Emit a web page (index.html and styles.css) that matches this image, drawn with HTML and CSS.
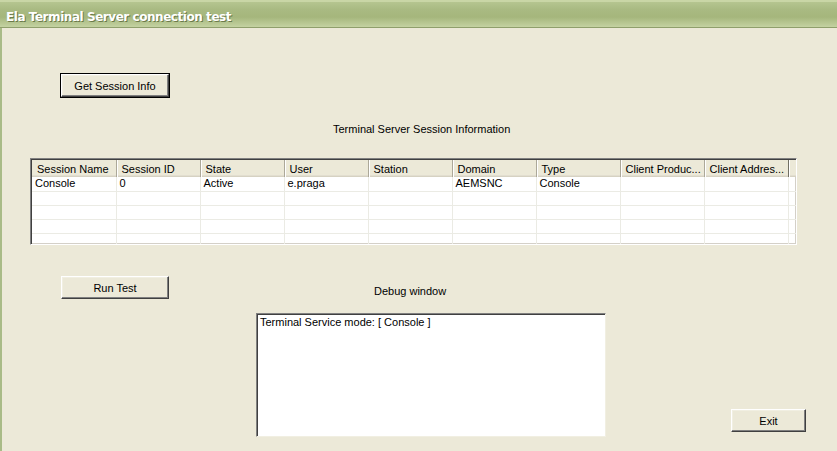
FILE: index.html
```html
<!DOCTYPE html>
<html lang="en">
<head>
    <meta charset="UTF-8">
    <title>Ela Terminal Server connection test</title>
    <link rel="stylesheet" href="styles.css">
</head>
<body>
    <div class="window">
        <div class="titlebar">Ela Terminal Server connection test</div>
        <div class="client">
            <div class="top-row">
                <button class="btn btn-default">Get Session Info</button>
            </div>

            <div class="caption">Terminal Server Session Information</div>

            <div class="listview">
                <table>
                    <thead>
                        <tr>
                            <th>Session Name</th>
                            <th>Session ID</th>
                            <th>State</th>
                            <th>User</th>
                            <th>Station</th>
                            <th>Domain</th>
                            <th>Type</th>
                            <th>Client Produc...</th>
                            <th>Client Addres...</th>
                            <th class="filler"></th>
                        </tr>
                    </thead>
                    <tbody>
                        <tr>
                            <td>Console</td><td>0</td><td>Active</td><td>e.praga</td><td></td>
                            <td>AEMSNC</td><td>Console</td><td></td><td></td><td class="filler"></td>
                        </tr>
                        <tr><td></td><td></td><td></td><td></td><td></td><td></td><td></td><td></td><td></td><td class="filler"></td></tr>
                        <tr><td></td><td></td><td></td><td></td><td></td><td></td><td></td><td></td><td></td><td class="filler"></td></tr>
                        <tr><td></td><td></td><td></td><td></td><td></td><td></td><td></td><td></td><td></td><td class="filler"></td></tr>
                        <tr class="last"><td></td><td></td><td></td><td></td><td></td><td></td><td></td><td></td><td></td><td class="filler"></td></tr>
                    </tbody>
                </table>
            </div>

            <div class="run-row">
                <button class="btn">Run Test</button>
                <span class="debug-label">Debug window</span>
            </div>

            <div class="debug-row">
                <div class="debug-box">Terminal Service mode: [ Console ]</div>
                <button class="btn btn-exit">Exit</button>
            </div>
        </div>
    </div>
</body>
</html>
```

FILE: styles.css
```css
html, body {
    margin: 0;
    height: 100%;
    overflow: hidden;
}

body {
    background: #ece9d8;
    font-family: "Liberation Sans", Arial, sans-serif;
    font-size: 11px;
    color: #000;
}

.window {
    height: 451px;
    border-left: 2px solid #a9bb87;
    box-sizing: border-box;
}

.titlebar {
    height: 28px;
    box-sizing: border-box;
    padding: 8px 0 0 6px;
    margin-left: -2px;
    border-top: 2px solid #c9d6a6;
    border-bottom: 1px solid #8f9f6c;
    background: linear-gradient(to bottom, #b5c590 0%, #a9ba82 30%, #a5b67c 60%, #bccb98 90%, #c4d2a2 100%);
    color: #fff;
    font-family: "DejaVu Sans", Tahoma, sans-serif;
    font-weight: bold;
    font-size: 12px;
    letter-spacing: -0.45px;
    text-shadow: 1px 1px 0 #6b7a4a;
}

.client {
    padding-top: 46px;
}

.top-row {
    padding-left: 59px;
}

.btn {
    display: block;
    width: 108px;
    height: 23px;
    padding: 0;
    background: #ece9d8;
    border: 1px solid;
    border-color: #fff #404040 #404040 #fff;
    box-shadow: inset -1px -1px 0 #808080, inset 1px 1px 0 #f1efe2;
    font-family: "Liberation Sans", Arial, sans-serif;
    font-size: 11px;
    color: #000;
}

.btn-default {
    outline: 1px solid #000;
    outline-offset: 0;
}

.caption {
    margin-top: 25px;
    padding-left: 331px;
    line-height: 14px;
}

.listview {
    margin: 22px 0 0 28px;
    width: 767px;
    height: 87px;
    box-sizing: border-box;
    border: 1px solid;
    border-color: #808080 #fff #fff #808080;
    box-shadow: inset 1px 1px 0 #404040, inset -1px -1px 0 #d4d0c8;
    background: #fff;
    overflow: hidden;
    padding: 1px 0 0 1px;
}

.listview table {
    border-collapse: collapse;
    table-layout: fixed;
    width: 764px;
}

.listview th {
    width: 84px;
    height: 17px;
    padding: 0 0 0 5px;
    box-sizing: border-box;
    text-align: left;
    font-weight: normal;
    background: #ece9d8;
    border-right: 1px solid #aca899;
    box-shadow: inset 1px 0 0 #fff, inset 0 -1px 0 #d6d2c2, inset 0 -2px 0 #e2ded0;
    white-space: nowrap;
    overflow: hidden;
}

.listview th:first-child {
    box-shadow: inset 0 -1px 0 #d6d2c2, inset 0 -2px 0 #e2ded0;
}

.listview th:nth-child(9) {
    border-right: 1px solid #716f64;
}

.listview th.filler {
    width: auto;
    border-right: none;
}

.listview td {
    height: 14px;
    padding: 0 0 0 3px;
    box-sizing: border-box;
    border-right: 1px solid #ebebe4;
    border-bottom: 1px solid #ebebe4;
    white-space: nowrap;
    overflow: hidden;
    line-height: 13px;
}

.listview td.filler {
    border-right: none;
}

.run-row {
    display: flex;
    align-items: flex-start;
    margin-top: 31px;
    padding-left: 59px;
}

.run-row .debug-label {
    margin: 9px 0 0 205px;
}

.debug-row {
    display: flex;
    align-items: flex-end;
    margin-top: 14px;
    padding-left: 254px;
}

.debug-box {
    width: 350px;
    height: 124px;
    box-sizing: border-box;
    padding: 2px 0 0 3px;
    background: #fff;
    border: 1px solid;
    border-color: #808080 #f1efe2 #f1efe2 #808080;
    box-shadow: inset 1px 1px 0 #404040;
    line-height: 13px;
}

.btn-exit {
    width: 75px;
    height: 23px;
    margin: 0 0 5px 125px;
}
```
